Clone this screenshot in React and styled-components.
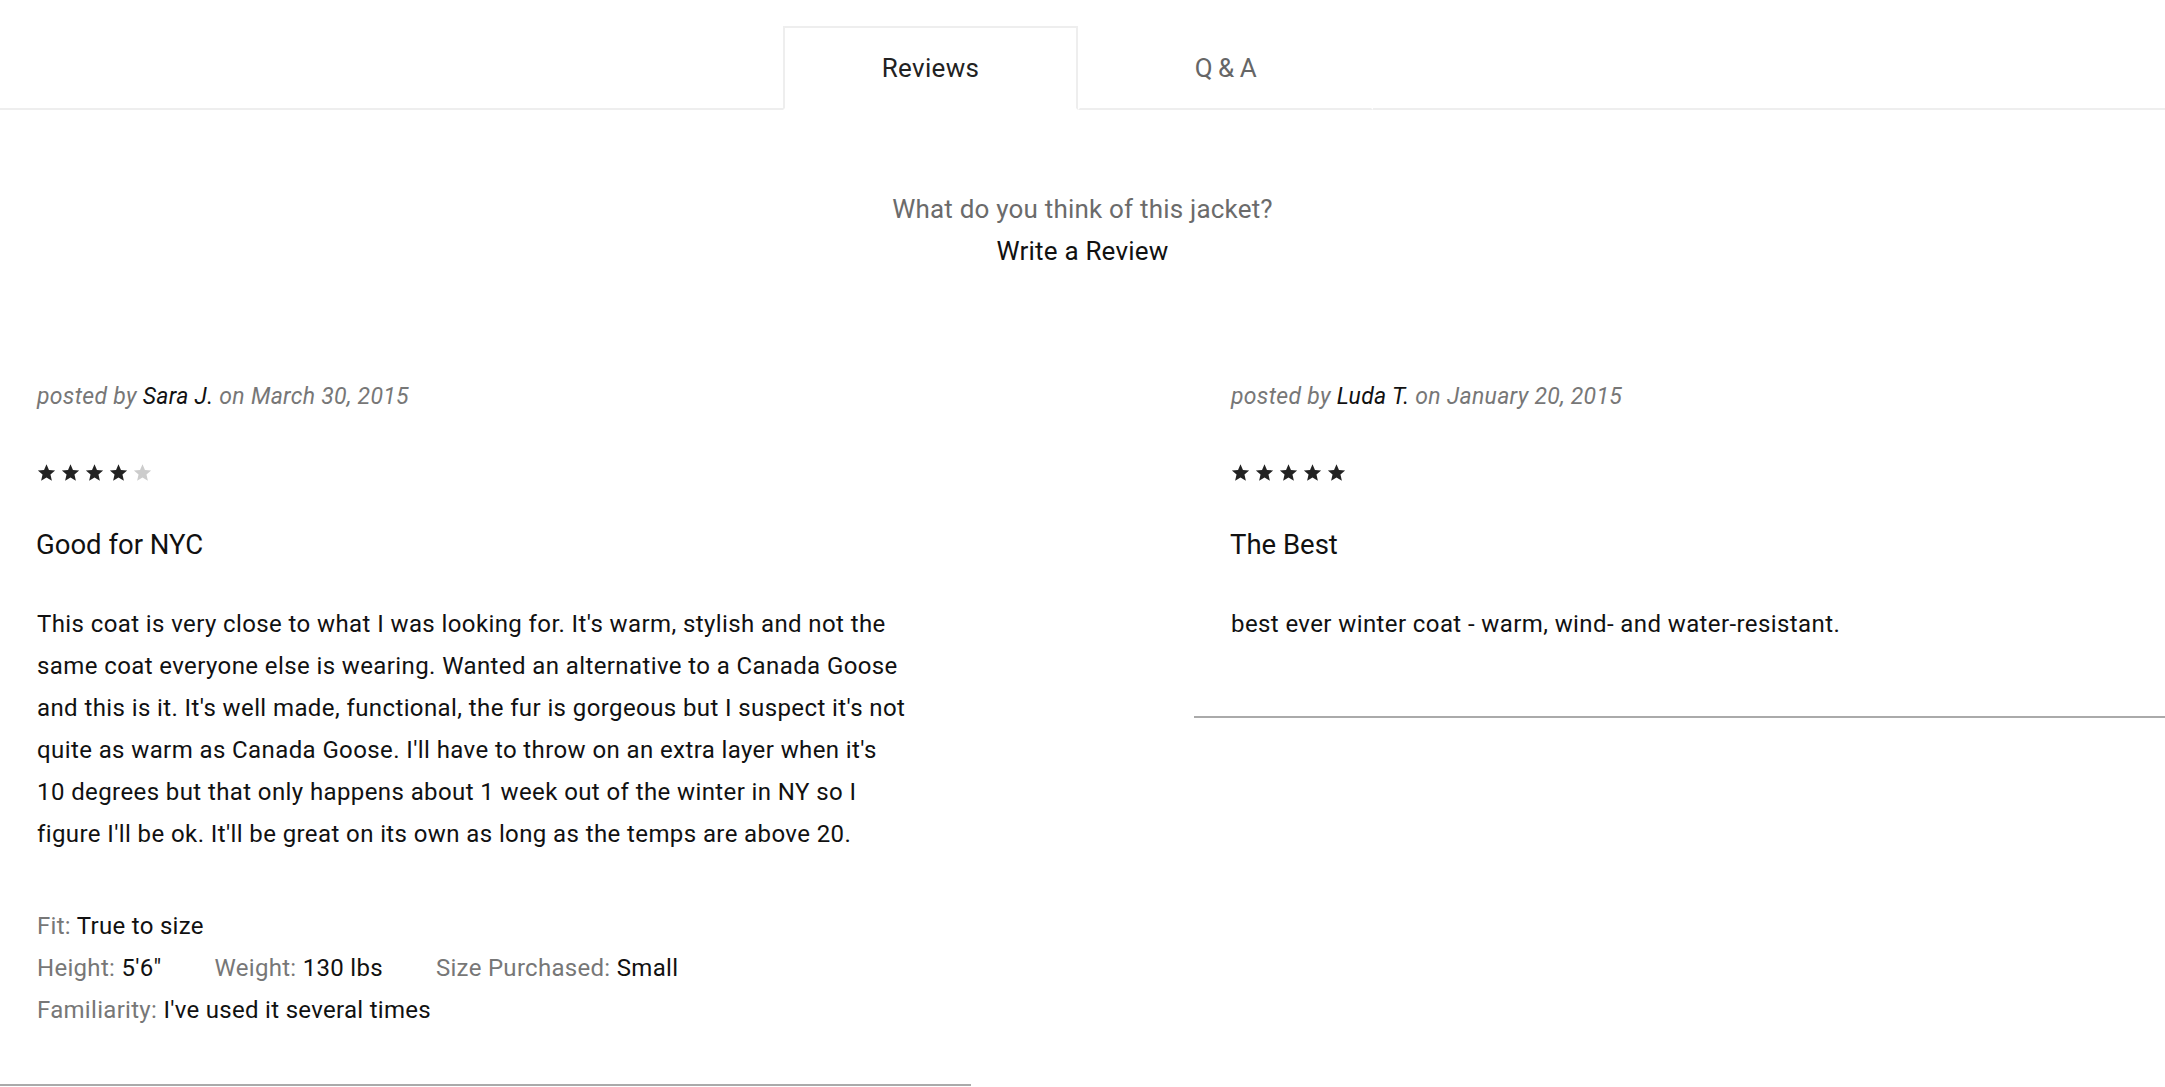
import React from 'react';
import styled, { createGlobalStyle } from 'styled-components';

const GlobalStyle = createGlobalStyle`
  html, body {
    margin: 0;
    padding: 0;
    background: #fff;
  }
  body {
    font-family: Roboto, "Liberation Sans", Arial, sans-serif;
    color: #111;
  }
`;

const reviews = [
  {
    id: 1,
    author: 'Sara J.',
    date: 'March 30, 2015',
    rating: 4,
    title: 'Good for NYC',
    body:
      "This coat is very close to what I was looking for. It's warm, stylish and not the same coat everyone else is wearing. Wanted an alternative to a Canada Goose and this is it. It's well made, functional, the fur is gorgeous but I suspect it's not quite as warm as Canada Goose. I'll have to throw on an extra layer when it's 10 degrees but that only happens about 1 week out of the winter in NY so I figure I'll be ok. It'll be great on its own as long as the temps are above 20.",
    details: {
      fit: 'True to size',
      height: '5\'6"',
      weight: '130 lbs',
      size: 'Small',
      familiarity: "I've used it several times",
    },
  },
  {
    id: 2,
    author: 'Luda T.',
    date: 'January 20, 2015',
    rating: 5,
    title: 'The Best',
    body: 'best ever winter coat - warm, wind- and water-resistant.',
  },
];

const Star = ({ filled }) => (
  <Styled.Star $filled={filled} viewBox="0 0 24 24">
    <path d="M12 1.5l3.1 7.2 7.8.7-5.9 5.2 1.8 7.7L12 18.2l-6.8 4.1 1.8-7.7-5.9-5.2 7.8-.7z" />
  </Styled.Star>
);

const Review = ({ review }) => {
  const { details } = review;
  return (
    <Styled.Card>
      <Styled.Posted>
        posted by <Styled.Author>{review.author}</Styled.Author> on {review.date}
      </Styled.Posted>
      <Styled.Stars>
        {[1, 2, 3, 4, 5].map((n) => (
          <Star key={n} filled={n <= review.rating} />
        ))}
      </Styled.Stars>
      <Styled.Title>{review.title}</Styled.Title>
      <Styled.Body>{review.body}</Styled.Body>
      {details && (
        <Styled.Details>
          <Styled.DetailRow>
            <Styled.Detail>
              <Styled.Label>Fit:</Styled.Label> {details.fit}
            </Styled.Detail>
          </Styled.DetailRow>
          <Styled.DetailRow>
            <Styled.Detail>
              <Styled.Label>Height:</Styled.Label> {details.height}
            </Styled.Detail>
            <Styled.Detail>
              <Styled.Label>Weight:</Styled.Label> {details.weight}
            </Styled.Detail>
            <Styled.Detail>
              <Styled.Label>Size Purchased:</Styled.Label> {details.size}
            </Styled.Detail>
          </Styled.DetailRow>
          <Styled.DetailRow>
            <Styled.Detail>
              <Styled.Label>Familiarity:</Styled.Label> {details.familiarity}
            </Styled.Detail>
          </Styled.DetailRow>
        </Styled.Details>
      )}
    </Styled.Card>
  );
};

const App = () => {
  return (
    <Styled.Page>
      <GlobalStyle />
      <Styled.TabBar>
        <Styled.Tab $active>Reviews</Styled.Tab>
        <Styled.Tab>Q &amp; A</Styled.Tab>
      </Styled.TabBar>
      <Styled.Prompt>
        <Styled.Question>What do you think of this jacket?</Styled.Question>
        <Styled.WriteLink href="#">Write a Review</Styled.WriteLink>
      </Styled.Prompt>
      <Styled.List>
        {reviews.map((r) => (
          <Review key={r.id} review={r} />
        ))}
      </Styled.List>
    </Styled.Page>
  );
};

const Styled = {
  Page: styled.div`
    width: 100%;
    padding-top: 26px;
  `,
  TabBar: styled.nav`
    display: flex;
    justify-content: center;
    padding-right: 9px;
    border-bottom: 2px solid #eeeeee;
  `,
  Tab: styled.div`
    width: 295px;
    height: 84px;
    box-sizing: border-box;
    display: flex;
    align-items: center;
    justify-content: center;
    margin-bottom: -2px;
    font-size: 26px;
    letter-spacing: ${({ $active }) => ($active ? '0.3px' : '-0.5px')};
    color: ${({ $active }) => ($active ? '#222' : '#666')};
    background: #fff;
    border: 2px solid ${({ $active }) => ($active ? '#eeeeee' : 'transparent')};
    border-bottom: 2px solid ${({ $active }) => ($active ? '#fff' : '#eeeeee')};
  `,
  Prompt: styled.div`
    display: flex;
    flex-direction: column;
    align-items: center;
    margin-top: 78px;
    font-size: 26px;
    letter-spacing: 0.2px;
    line-height: 42px;
  `,
  Question: styled.div`
    color: #6b6b6b;
  `,
  WriteLink: styled.a`
    color: #111;
    text-decoration: none;
  `,
  List: styled.div`
    display: grid;
    grid-template-columns: 1fr 1fr;
    column-gap: 223px;
    align-items: start;
    margin-top: 104px;
  `,
  Card: styled.article`
    padding: 0 37px 21px;
    border-bottom: 2px solid #aaaaaa;
  `,
  Posted: styled.div`
    font-size: 23px;
    letter-spacing: 0.3px;
    line-height: 42px;
    font-style: italic;
    color: #777;
  `,
  Author: styled.span`
    color: #111;
  `,
  Stars: styled.div`
    display: flex;
    gap: 5px;
    margin-top: 45px;
    height: 19px;
  `,
  Star: styled.svg`
    width: 19px;
    height: 19px;
    fill: ${({ $filled }) => ($filled ? '#222' : '#cccccc')};
  `,
  Title: styled.h3`
    margin: 42px 0 0 -1px;
    font-size: 27.5px;
    font-weight: 400;
    line-height: 42px;
    color: #111;
  `,
  Body: styled.p`
    margin: 37px 0 50px;
    max-width: 870px;
    font-size: 24px;
    letter-spacing: 0.4px;
    line-height: 42px;
    color: #111;
  `,
  Details: styled.div`
    margin-bottom: 32px;
    font-size: 24px;
    letter-spacing: 0.3px;
    line-height: 42px;
  `,
  DetailRow: styled.div`
    display: flex;
    gap: 53px;
  `,
  Detail: styled.span`
    color: #111;
  `,
  Label: styled.span`
    color: #777;
  `,
};

export default App;
